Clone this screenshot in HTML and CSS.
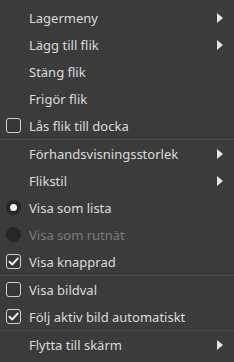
FILE: index.html
```html
<!DOCTYPE html>
<html lang="sv">
<head>
    <meta charset="UTF-8">
    <meta name="viewport" content="width=device-width, initial-scale=1.0">
    <title>Flikmeny</title>
    <link rel="stylesheet" href="styles.css">
</head>
<body>
    <div class="menu">
        <div class="item"><span class="mark"></span><span class="label">Lagermeny</span><span class="arrow"></span></div>
        <div class="item"><span class="mark"></span><span class="label">Lägg till flik</span><span class="arrow"></span></div>
        <div class="item"><span class="mark"></span><span class="label">Stäng flik</span></div>
        <div class="item"><span class="mark"></span><span class="label">Frigör flik</span></div>
        <div class="item"><span class="mark check"></span><span class="label">Lås flik till docka</span></div>
        <div class="separator"></div>
        <div class="item"><span class="mark"></span><span class="label">Förhandsvisningsstorlek</span><span class="arrow"></span></div>
        <div class="item"><span class="mark"></span><span class="label">Flikstil</span><span class="arrow"></span></div>
        <div class="item"><span class="mark radio on"></span><span class="label">Visa som lista</span></div>
        <div class="item disabled"><span class="mark radio"></span><span class="label">Visa som rutnät</span></div>
        <div class="item"><span class="mark check on">
            <svg viewBox="0 0 15 15" width="15" height="15"><path d="M3.5 7.8 L6.3 10.4 L11.6 4.6" fill="none" stroke="#f2f2f2" stroke-width="2" stroke-linecap="round" stroke-linejoin="round"/></svg>
        </span><span class="label">Visa knapprad</span></div>
        <div class="separator"></div>
        <div class="item"><span class="mark check"></span><span class="label">Visa bildval</span></div>
        <div class="item"><span class="mark check on">
            <svg viewBox="0 0 15 15" width="15" height="15"><path d="M3.5 7.8 L6.3 10.4 L11.6 4.6" fill="none" stroke="#f2f2f2" stroke-width="2" stroke-linecap="round" stroke-linejoin="round"/></svg>
        </span><span class="label">Följ aktiv bild automatiskt</span></div>
        <div class="separator"></div>
        <div class="item"><span class="mark"></span><span class="label">Flytta till skärm</span><span class="arrow"></span></div>
    </div>
</body>
</html>
```

FILE: styles.css
```css
body {
    margin: 0;
    background-color: #3b3b3b;
    font-family: "Noto Sans", "DejaVu Sans", sans-serif;
}
.menu {
    width: 234px;
    padding: 4px 0;
    box-sizing: border-box;
    background-color: #3b3b3b;
}
.item {
    display: flex;
    align-items: center;
    height: 27px;
    padding-left: 6px;
    color: #dcdcdc;
    font-size: 13px;
}
.item.disabled {
    color: #7a7a7a;
}
.label {
    flex: 1;
    margin-left: 8px;
    white-space: nowrap;
}
.mark {
    display: flex;
    align-items: center;
    justify-content: center;
    width: 15px;
    height: 15px;
    box-sizing: border-box;
}
.mark.check {
    border: 1px solid #d0d0d0;
    border-radius: 3px;
    background-color: #373737;
}
.mark.check svg {
    margin: -1px;
}
.mark.radio {
    border-radius: 50%;
    background-color: #272727;
}
.mark.radio.on::after {
    content: "";
    width: 7px;
    height: 7px;
    border-radius: 50%;
    background-color: #f4f4f4;
}
.arrow {
    width: 0;
    height: 0;
    margin-right: 11px;
    border-top: 5.5px solid transparent;
    border-bottom: 5.5px solid transparent;
    border-left: 6px solid #e6e6e6;
}
.separator {
    height: 1px;
    background-color: #4c4c4c;
}
```
